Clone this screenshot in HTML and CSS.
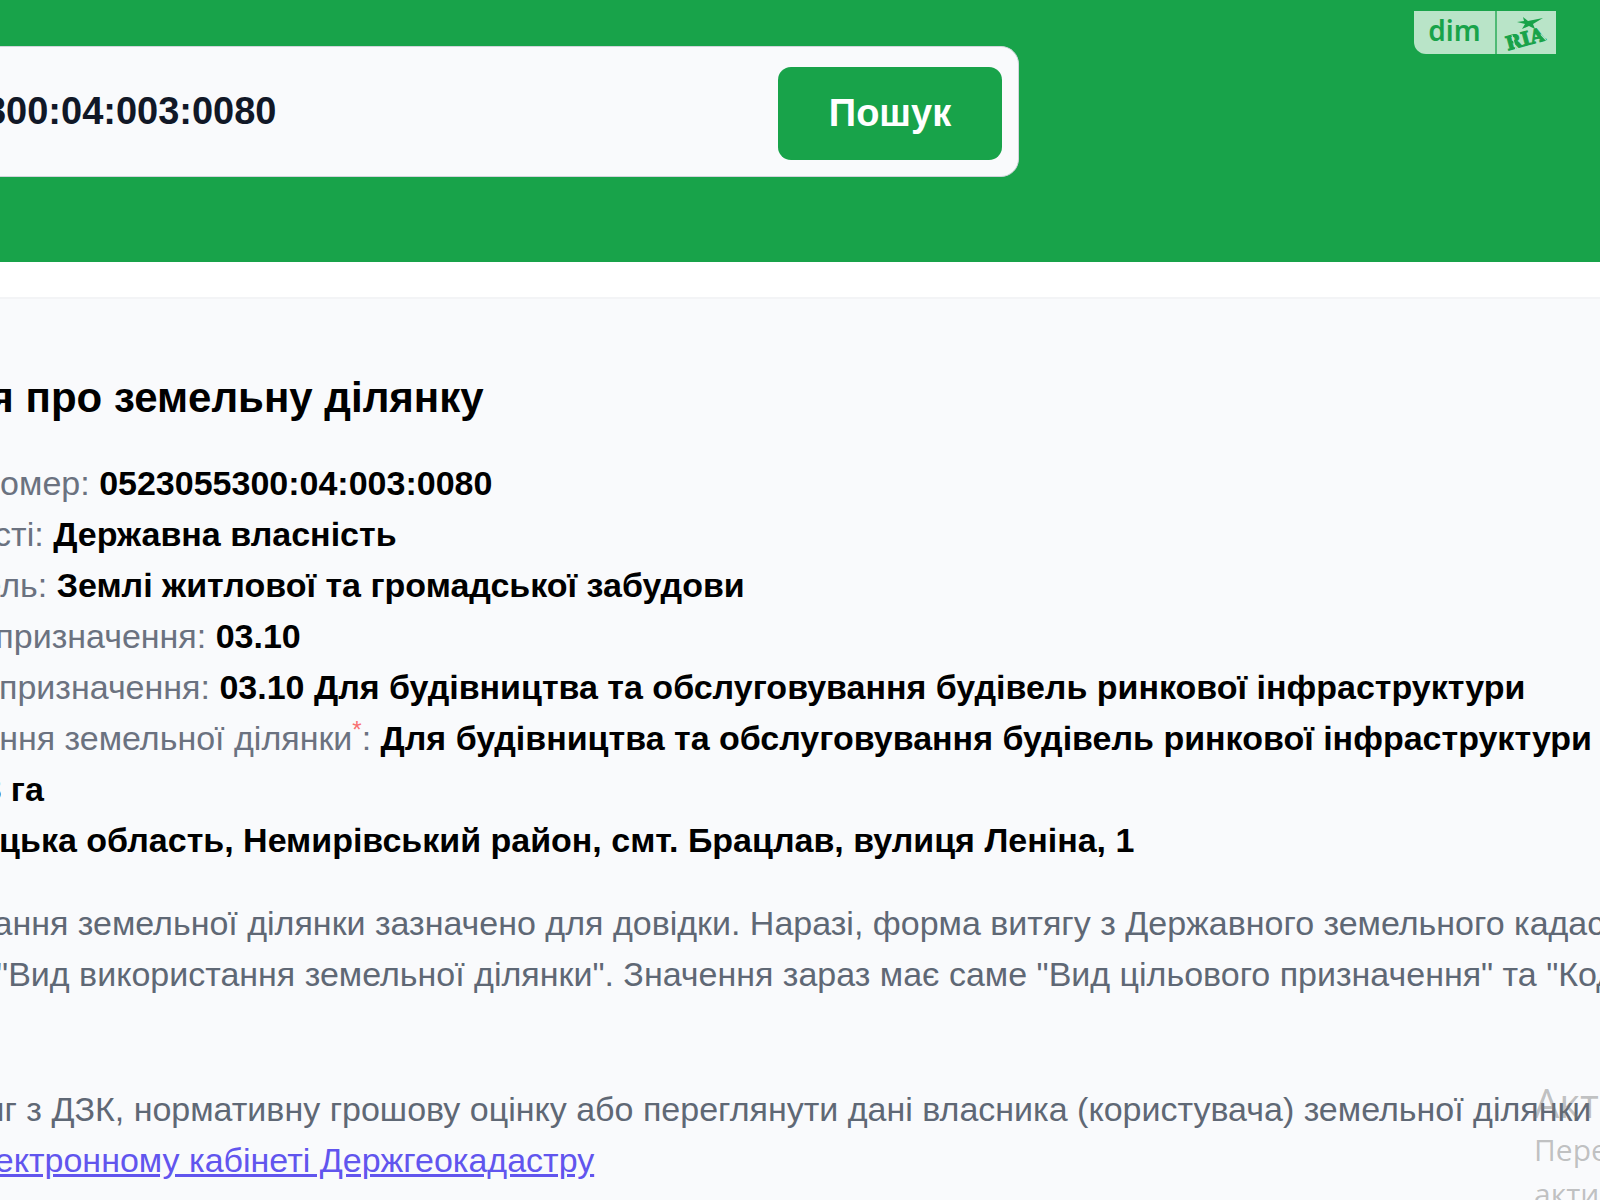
FILE: index.html
```html
<!DOCTYPE html>
<html lang="uk">
<head>
<meta charset="utf-8">
<title>Інформація про земельну ділянку</title>
<link rel="stylesheet" href="styles.css">
</head>
<body>
<header class="top">
  <form class="search">
    <input class="search-input" type="text" aria-label="Кадастровий номер" value="0523055300:04:003:0080">
    <button class="search-button" type="button">Пошук</button>
  </form>
  <a class="brand" href="#" aria-label="dim RIA">
    <span class="brand-dim">dim</span>
    <svg class="brand-ria" viewBox="0 0 59 43" width="59" height="43" aria-hidden="true">
      <g transform="rotate(-15 30 26)" fill="#18a34a">
        <text x="8" y="34" font-family="DejaVu Serif, serif" font-weight="700" font-size="19" stroke="#18a34a" stroke-width="1">RIA</text>
        <path d="M16 20v15M44 27l4 8" stroke="#b9e4c8" stroke-width="1" fill="none"/>
      </g>
      <path d="M26 6l5 4 15-3-10 6 2 5-6-3-7 3 3-5-8-2 7-1z" fill="#18a34a"/>
    </svg>
  </a>
</header>
<main class="card">
  <h1 class="title">Інформація про земельну ділянку</h1>
  <ul class="facts">
    <li>Кадастровий номер: <b>0523055300:04:003:0080</b></li>
    <li>Форма власності: <b>Державна власність</b></li>
    <li>Категорія земель: <b>Землі житлової та громадської забудови</b></li>
    <li>Код цільового призначення: <b>03.10</b></li>
    <li>Вид цільового призначення: <b>03.10 Для будівництва та обслуговування будівель ринкової інфраструктури</b></li>
    <li>Вид використання земельної ділянки<sup class="star">*</sup>: <b>Для будівництва та обслуговування будівель ринкової інфраструктури</b></li>
    <li>Площа: <b>0.0858 га</b></li>
    <li>Адреса: <b>Вінницька область, Немирівський район, смт. Брацлав, вулиця Леніна, 1</b></li>
  </ul>
  <p class="note">*Вид використання земельної ділянки зазначено для довідки. Наразі, форма витягу з Державного земельного кадастру<br>не має пункту "Вид використання земельної ділянки". Значення зараз має саме "Вид цільового призначення" та "Код</p>
  <p class="note order">Отримати витяг з ДЗК, нормативну грошову оцінку або переглянути дані власника (користувача) земельної ділянки можна<br>замовити у <a href="#">Електронному кабінеті Держгеокадастру</a></p>
</main>
<aside class="watermark">
  <span class="watermark-title">Активація</span>
  <span>Перейдіть</span>
  <span>активувати</span>
</aside>
</body>
</html>
```
FILE: styles.css
```css
* { box-sizing: border-box; }

body {
  margin: 0;
  min-height: 100vh;
  position: relative;
  overflow: hidden;
  display: flex;
  flex-direction: column;
  background: #fff;
  font-family: "Liberation Sans", Arial, sans-serif;
}

.top {
  display: flex;
  justify-content: space-between;
  align-items: flex-start;
  padding: 11px 44px 85px 0;
  background: #18a34a;
}

.search {
  display: flex;
  align-items: center;
  width: 1219px;
  height: 131px;
  margin-top: 35px;
  margin-left: -200px;
  padding: 3px 16px 0 36px;
  border: 1px solid #d1d5db;
  border-radius: 18px;
  background: #f9fafc;
}

.search-input {
  flex: 1;
  min-width: 0;
  padding: 0 0 4px;
  border: 0;
  outline: 0;
  background: transparent;
  color: #111827;
  font: 700 38px/48px "Liberation Sans", Arial, sans-serif;
}

.search-button {
  width: 224px;
  height: 93px;
  padding: 0;
  border: 0;
  border-radius: 13px;
  background: #18a34a;
  color: #fff;
  font: 700 38px/48px "Liberation Sans", Arial, sans-serif;
}

.brand {
  display: flex;
  width: 142px;
  height: 43px;
  border-radius: 0 0 0 12px;
  background: #b9e4c8;
  color: #18a34a;
  text-decoration: none;
}

.brand-dim {
  flex: 1;
  border-right: 2px solid #4fba75;
  font: 600 28px/38px "Noto Sans", sans-serif;
  text-align: center;
}

.card {
  flex: 1;
  margin-top: 35px;
  margin-left: -232px;
  padding-top: 67px;
  border-top: 2px solid #f3f4f6;
  background: #f9fafc;
  color: #6b7280;
  font-size: 34px;
  line-height: 51px;
  white-space: nowrap;
}

.title {
  margin: 0 0 29px;
  padding-left: 6px;
  color: #000;
  font-size: 42px;
  line-height: 63px;
}

.facts {
  margin: 0;
  padding: 0;
  list-style: none;
}

.facts b { color: #000; }

.star {
  color: #f87171;
  font-size: 24px;
  line-height: 0;
}

.note {
  margin: 32px 0 0;
  color: #5f6875;
}

.order { margin-top: 84px; }

.note a { color: #6155ee; }

.watermark {
  position: absolute;
  top: 1078px;
  left: calc(100% - 66px);
  display: flex;
  flex-direction: column;
  color: rgba(120, 120, 120, 0.45);
  font: 30px/44px "Open Sans", sans-serif;
  pointer-events: none;
}

.watermark-title { font-size: 40px; line-height: 50px; }
```
